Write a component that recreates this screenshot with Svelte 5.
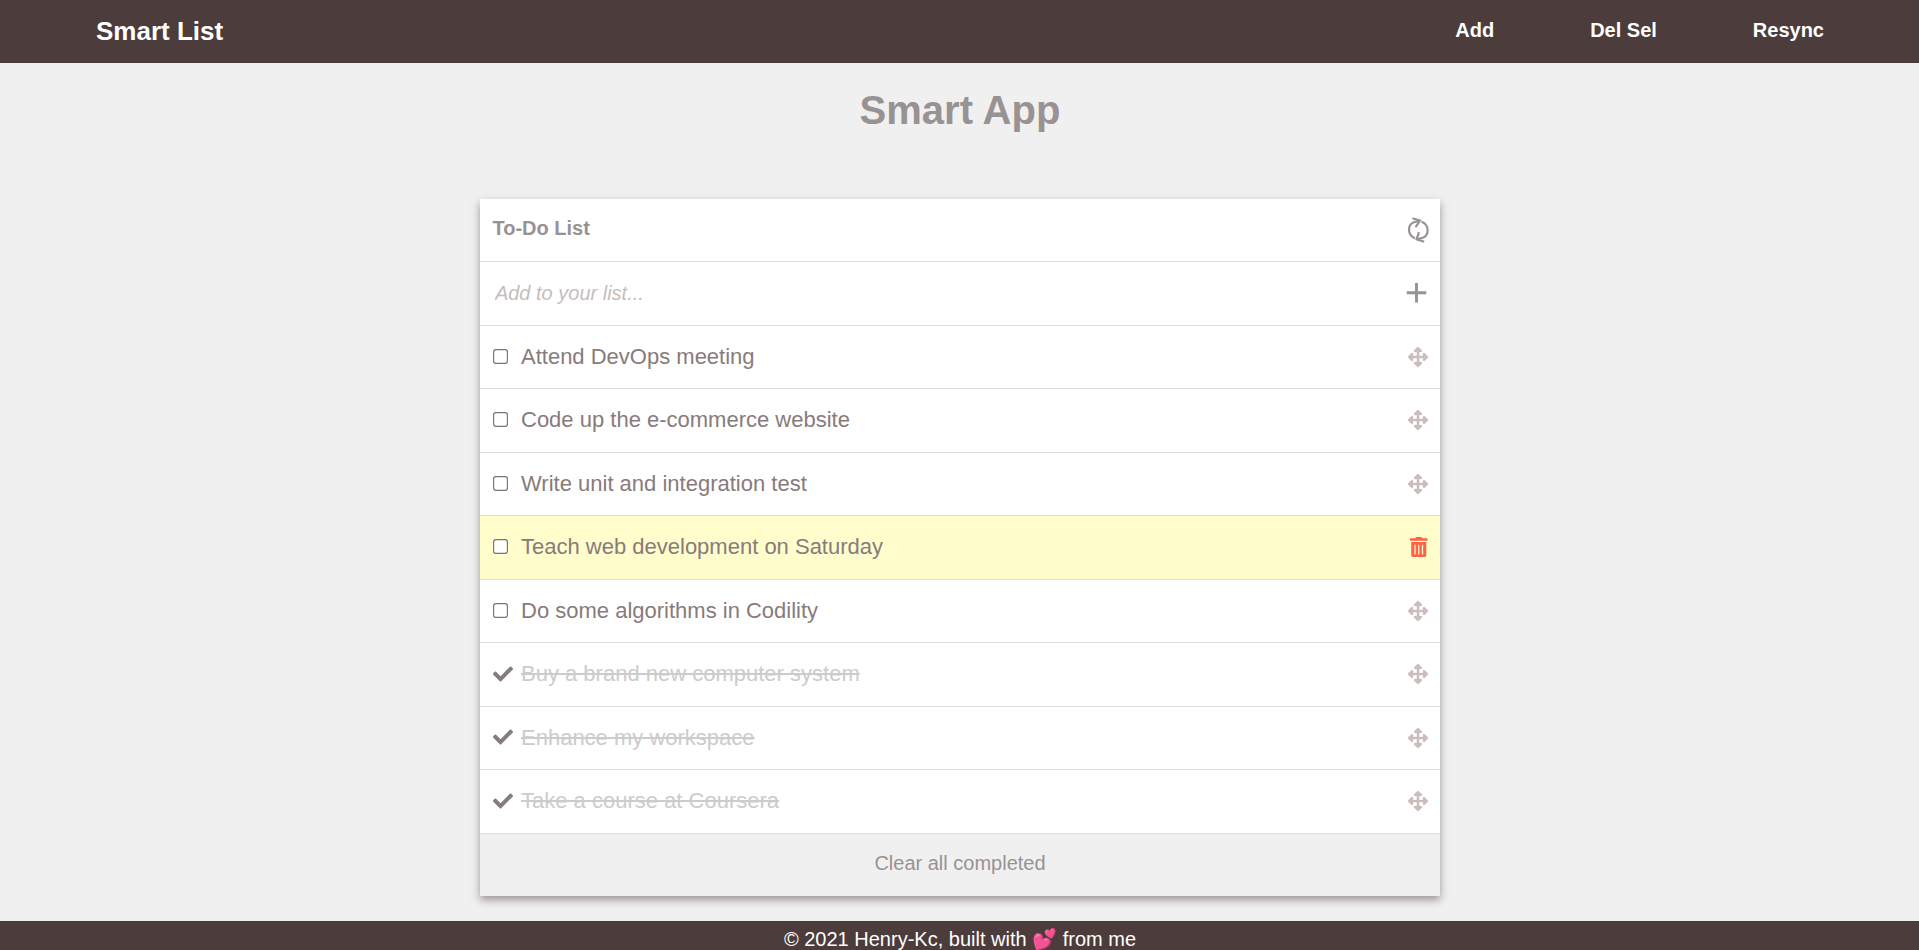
<script>
  const tasks = [
    { text: 'Attend DevOps meeting', done: false },
    { text: 'Code up the e-commerce website', done: false },
    { text: 'Write unit and integration test', done: false },
    { text: 'Teach web development on Saturday', done: false, selected: true },
    { text: 'Do some algorithms in Codility', done: false },
    { text: 'Buy a brand new computer system', done: true },
    { text: 'Enhance my workspace', done: true },
    { text: 'Take a course at Coursera', done: true },
  ];
</script>

<header>
  <div class="logo">Smart List</div>
  <nav>
    <a href="#add">Add</a>
    <a href="#delete">Del Sel</a>
    <a href="#resync">Resync</a>
  </nav>
</header>

<main>
  <h1>Smart App</h1>
  <section class="card">
    <div class="row title">
      <h2>To-Do List</h2>
      <svg class="refresh" width="20" height="26" viewBox="0 0 20 26" fill="none" stroke="currentColor" stroke-width="2.200">
        <path d="M7 21.200C-0.800 18 -0.800 8 5.800 5.200L11.600 3.700M13.600 4.800C21.400 8 21.400 18 14.800 20.800L9 22.300" />
        <path d="M4.400 1.300L12 3.700L7.600 10.200M16.200 24.700L8.600 22.300L11 15.200" />
      </svg>
    </div>
    <div class="row add">
      <input class="entry" type="text" placeholder="Add to your list..." />
      <svg class="plus" width="20" height="20" viewBox="0 0 20 20" fill="none" stroke="currentColor" stroke-width="2.900">
        <path d="M9.500 -0.100V19.500M-0.300 9.700H19.300" />
      </svg>
    </div>
    <ul>
      {#each tasks as task}
        <li class="row" class:selected={task.selected} class:done={task.done}>
          <span class="mark">
            {#if task.done}
              <svg width="20" height="20" viewBox="0 0 512 512" fill="currentColor">
                <path d="M173.898 439.404l-166.400-166.400c-9.997-9.997-9.997-26.206 0-36.204l36.203-36.204c9.997-9.998 26.207-9.998 36.204 0L192 312.690 432.095 72.596c9.997-9.997 26.207-9.997 36.204 0l36.203 36.204c9.997 9.997 9.997 26.206 0 36.204l-294.400 294.401c-9.998 9.997-26.207 9.997-36.204-.001z" />
              </svg>
            {:else}
              <input type="checkbox" />
            {/if}
          </span>
          <span class="text">{task.text}</span>
          {#if task.selected}
            <svg class="trash" width="17.500" height="20" viewBox="0 0 448 512" fill="currentColor">
              <path d="M32 464a48 48 0 0 0 48 48h288a48 48 0 0 0 48-48V128H32zm272-256a16 16 0 0 1 32 0v224a16 16 0 0 1-32 0zm-96 0a16 16 0 0 1 32 0v224a16 16 0 0 1-32 0zm-96 0a16 16 0 0 1 32 0v224a16 16 0 0 1-32 0zM432 32H312l-9.400-18.700A24 24 0 0 0 281.100 0H166.800a23.720 23.720 0 0 0-21.400 13.300L136 32H16A16 16 0 0 0 0 48v32a16 16 0 0 0 16 16h416a16 16 0 0 0 16-16V48a16 16 0 0 0-16-16z" />
            </svg>
          {:else}
            <svg class="move" width="20" height="20" viewBox="0 0 512 512" fill="currentColor">
              <path d="M352.201 425.775l-79.196 79.196c-9.373 9.373-24.568 9.373-33.941 0l-79.196-79.196c-15.119-15.119-4.411-40.971 16.971-40.970h51.162L228 284H127.196v51.162c0 21.382-25.851 32.090-40.971 16.971L7.029 272.937c-9.373-9.373-9.373-24.569 0-33.941L86.225 159.800c15.119-15.119 40.971-4.411 40.971 16.971V228H228V127.196h-51.230c-21.382 0-32.090-25.851-16.971-40.971l79.196-79.196c9.373-9.373 24.568-9.373 33.941 0l79.196 79.196c15.119 15.119 4.411 40.971-16.971 40.971h-51.162V228h100.804v-51.162c0-21.382 25.851-32.090 40.970-16.971l79.196 79.196c9.373 9.373 9.373 24.569 0 33.941L425.773 352.200c-15.119 15.119-40.971 4.411-40.970-16.971V284H284v100.804h51.230c21.382 0 32.090 25.851 16.971 40.971z" />
            </svg>
          {/if}
        </li>
      {/each}
    </ul>
    <button class="clear">Clear all completed</button>
  </section>
</main>

<footer>© 2021 Henry-Kc, built with 💕 from me</footer>

<style>
  :global(body) {
    background: #f0f0f0;
    font-family: 'Liberation Sans', Arial, sans-serif;
    font-size: 20px;
    overflow: hidden;
  }
  :global(#app) {
    display: flex;
    flex-direction: column;
    height: 950px;
    overflow: hidden;
  }
  header {
    display: flex;
    align-items: center;
    justify-content: space-between;
    flex: none;
    box-sizing: border-box;
    height: 63px;
    padding: 0 95px 0 96px;
    background: #4c3c3c;
    color: #fff;
    font-weight: bold;
  }
  .logo {
    font-size: 26px;
  }
  nav {
    display: flex;
    gap: 96px;
    padding-bottom: 2px;
  }
  nav a {
    color: inherit;
    text-decoration: none;
  }
  main {
    display: flex;
    flex-direction: column;
    align-items: center;
    flex: none;
    height: 858px;
  }
  h1 {
    margin: 24px 0 66px;
    padding-left: 1px;
    font-size: 40px;
    line-height: 46px;
    color: #989292;
  }
  .card {
    width: 960px;
    background: #fff;
    box-shadow: 0 4px 8px rgba(76, 60, 60, 0.5);
  }
  .row {
    display: flex;
    align-items: center;
    box-sizing: border-box;
    height: 63.5px;
    padding: 0 12px 0 13px;
    border-bottom: 1px solid #e0dcdc;
  }
  .title {
    height: 63px;
    justify-content: space-between;
    color: #989292;
  }
  h2 {
    margin: 0 0 4px;
    font-size: 20px;
  }
  .refresh {
    overflow: visible;
  }
  .add {
    height: 63.6px;
    color: #989292;
  }
  .entry {
    flex: 1;
    padding: 0 2.4px;
    border: 0;
    outline: 0;
    background: none;
    font: italic 20px 'Liberation Sans', Arial, sans-serif;
  }
  .entry::placeholder {
    color: #c8bcbc;
    opacity: 1;
  }
  .plus {
    margin: 0 1px 1px 0;
    overflow: visible;
  }
  ul {
    margin: 0;
    padding: 0;
    list-style: none;
  }
  .mark {
    display: flex;
    width: 28.5px;
    margin-bottom: 1px;
    color: #887b7b;
  }
  .mark input {
    width: 13px;
    height: 13px;
    margin: 1px;
    transform: scale(1.15);
  }
  .text {
    flex: 1;
    margin-bottom: 0.5px;
    font-size: 22px;
    color: #887b7b;
  }
  .done .text {
    color: #ccc;
    text-decoration: line-through;
  }
  .selected {
    background: #fffdcc;
  }
  .move {
    margin-bottom: 0.5px;
    stroke: currentColor;
    stroke-width: 8px;
    overflow: visible;
    color: #ccbcbc;
  }
  .trash {
    margin-bottom: 1.6px;
    color: tomato;
  }
  .clear {
    display: block;
    width: 100%;
    height: 62.4px;
    padding: 0 0 2.4px 1px;
    border: 0;
    background: #f0f0f0;
    color: #989292;
    font: 20px 'Liberation Sans', Arial, sans-serif;
  }
  footer {
    flex: none;
    height: 50px;
    padding: 7px 0 0 1px;
    background: #4c3c3c;
    color: #fff;
    text-align: center;
    line-height: 23px;
  }
</style>
